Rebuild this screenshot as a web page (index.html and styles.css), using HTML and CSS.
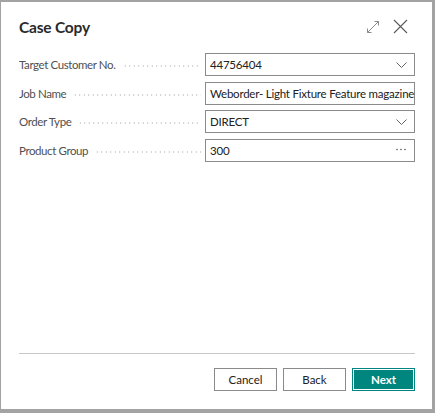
FILE: index.html
```html
<!DOCTYPE html>
<html>
<head>
<meta charset="utf-8">
<link rel="stylesheet" href="styles.css">
</head>
<body>
<div class="dialog">
  <div class="header">
    <div class="title">Case Copy</div>
    <div class="actions">
      <svg class="icon expand" width="14" height="14" viewBox="0 0 14 14">
        <path d="M1.5 12.5 L12.5 1.5 M8.5 1.5 H12.5 V5.5 M1.5 8.5 V12.5 H5.5" fill="none" stroke="#8a8a8a" stroke-width="1"/>
      </svg>
      <svg class="icon close" width="15" height="15" viewBox="0 0 15 15">
        <path d="M1 1 L14 14 M14 1 L1 14" fill="none" stroke="#5a5a5a" stroke-width="1.1"/>
      </svg>
    </div>
  </div>
  <div class="form">
    <div class="row">
      <div class="label"><span>Target Customer No.</span><span class="dots"></span></div>
      <div class="field"><span class="value">44756404</span>
        <svg class="chev" width="11" height="6" viewBox="0 0 11 6"><path d="M0.5 0.5 L5.5 5.5 L10.5 0.5" fill="none" stroke="#666" stroke-width="1"/></svg>
      </div>
    </div>
    <div class="row">
      <div class="label"><span>Job Name</span><span class="dots"></span></div>
      <div class="field"><span class="value">Weborder- Light Fixture Feature magazine</span></div>
    </div>
    <div class="row">
      <div class="label"><span>Order Type</span><span class="dots"></span></div>
      <div class="field"><span class="value">DIRECT</span>
        <svg class="chev" width="11" height="6" viewBox="0 0 11 6"><path d="M0.5 0.5 L5.5 5.5 L10.5 0.5" fill="none" stroke="#666" stroke-width="1"/></svg>
      </div>
    </div>
    <div class="row">
      <div class="label"><span>Product Group</span><span class="dots"></span></div>
      <div class="field"><span class="value">300</span>
        <svg class="more" width="10" height="3" viewBox="0 0 10 3"><circle cx="1" cy="1.5" r="0.8" fill="#555"/><circle cx="5" cy="1.5" r="0.8" fill="#555"/><circle cx="9" cy="1.5" r="0.8" fill="#555"/></svg>
      </div>
    </div>
  </div>
  <div class="footer">
    <button class="btn">Cancel</button>
    <button class="btn">Back</button>
    <button class="btn primary">Next</button>
  </div>
</div>
</body>
</html>
```
FILE: styles.css
```css
html, body {
  margin: 0;
  padding: 0;
}
body {
  width: 435px;
  height: 413px;
  background: #a3a3a3;
  font-family: Lato, "Open Sans", sans-serif;
  overflow: hidden;
}
.dialog {
  margin: 2px 0 0 1px;
  width: 431px;
  height: 407px;
  background: #fff;
  box-sizing: border-box;
  padding: 0 17px 0 18px;
  display: flex;
  flex-direction: column;
}
.header {
  height: 48px;
  display: flex;
  align-items: center;
  justify-content: space-between;
  box-sizing: border-box;
  padding-top: 1px;
}
.title {
  font-size: 15.5px;
  font-weight: 700;
  letter-spacing: -0.2px;
  color: #2a2a2a;
}
.actions {
  display: flex;
  align-items: center;
  gap: 13px;
  margin-right: 7px;
}
.form {
  display: flex;
  flex-direction: column;
  gap: 5.7px;
  padding-top: 3px;
}
.row {
  display: flex;
  align-items: center;
  height: 23px;
}
.label {
  width: 186px;
  display: flex;
  align-items: center;
  font-size: 11.5px;
  letter-spacing: -0.4px;
  color: #505050;
  white-space: nowrap;
  overflow: hidden;
}
.dots {
  flex: 1;
  height: 2px;
  margin: 3px 4px 0 7px;
  background-image: radial-gradient(circle, #c8c8c8 0.7px, transparent 0.9px);
  background-size: 4.5px 2px;
  background-repeat: repeat-x;
}
.field {
  width: 210px;
  height: 23px;
  box-sizing: border-box;
  border: 1px solid #8a8a8a;
  display: flex;
  align-items: center;
  justify-content: space-between;
  padding: 0 7px 0 4px;
  font-size: 11.5px;
  color: #212121;
}
.value {
  white-space: nowrap;
  letter-spacing: -0.22px;
}
.chev {
  margin-top: 1px;
}
.more {
  margin-right: 1px;
  margin-top: -2px;
}
.footer {
  margin-top: auto;
  border-top: 1px solid #c8c8c8;
  display: flex;
  justify-content: flex-end;
  gap: 6px;
  padding: 14px 0 18px 0;
}
.btn {
  width: 63px;
  height: 23px;
  box-sizing: border-box;
  background: #fff;
  border: 1px solid #8a8a8a;
  font-family: Lato, "Open Sans", sans-serif;
  font-size: 11.5px;
  color: #212121;
  padding: 0;
}
.btn.primary {
  background: #00857f;
  border: 1px solid #00857f;
  box-shadow: inset 0 0 0 1px #fff;
  color: #fff;
  font-weight: 700;
}
```
